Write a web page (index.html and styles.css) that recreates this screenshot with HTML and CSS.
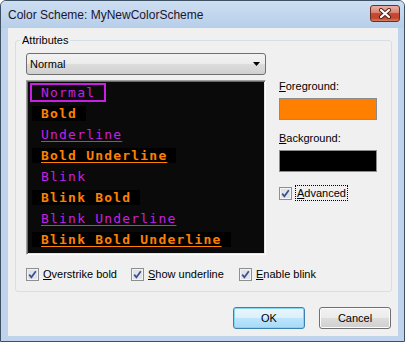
FILE: index.html
```html
<!DOCTYPE html>
<html lang="en">

<head>
    <link rel="stylesheet" href="styles.css">
</head>

<body>
    <div class="window">
        <div class="titlebar">
            <span class="title">Color Scheme: MyNewColorScheme</span>
            <span class="close-btn">
                <svg width="14" height="11" viewBox="0 0 14 11">
                    <path d="M3 2 L11 9 M11 2 L3 9" stroke="#4a1a14" stroke-width="4" stroke-linecap="round" />
                    <path d="M3 2 L11 9 M11 2 L3 9" stroke="#ffffff" stroke-width="2.2" stroke-linecap="round" />
                </svg>
            </span>
        </div>
        <div class="client">
            <fieldset class="group">
                <legend>Attributes</legend>
                <div class="group-main">
                    <div class="left-col">
                        <div class="dropdown">
                            <span>Normal</span>
                            <svg class="arrow" width="7" height="4" viewBox="0 0 7 4"><path d="M0 0 H7 L3.5 4 Z" fill="#000" /></svg>
                        </div>
                        <!-- attribute preview, one row per style -->
                        <div class="attr-list">
                            <div class="row"><span class="item selected"> Normal </span></div>
                            <div class="row"><span class="item bold"> Bold </span></div>
                            <div class="row"><span class="item"> <u>Underline</u> </span></div>
                            <div class="row"><span class="item bold"> <u>Bold Underline</u> </span></div>
                            <div class="row"><span class="item"> Blink </span></div>
                            <div class="row"><span class="item bold"> Blink Bold </span></div>
                            <div class="row"><span class="item"> <u>Blink Underline</u> </span></div>
                            <div class="row"><span class="item bold"> <u>Blink Bold Underline</u> </span></div>
                        </div>
                    </div>
                    <div class="right-col">
                        <div class="field-label"><u>F</u>oreground:</div>
                        <div class="swatch swatch-fg"></div>
                        <div class="field-label"><u>B</u>ackground:</div>
                        <div class="swatch swatch-bg"></div>
                        <label class="check check-advanced">
                            <span class="box">
                                <svg width="13" height="13" viewBox="0 0 13 13">
                                    <rect x="0.5" y="0.5" width="12" height="12" fill="#f3f3f3" stroke="#8e8f8f" />
                                    <rect x="2" y="2" width="9" height="9" fill="#dfe3ea" />
                                    <path d="M3.2 6.6 L5.4 9.3 L9.8 3.2" fill="none" stroke="#3b4f8c" stroke-width="1.7" />
                                </svg>
                            </span>
                            <span class="focus"><u>A</u>dvanced</span>
                        </label>
                    </div>
                </div>
                <div class="options">
                    <label class="check opt-overstrike">
                        <span class="box">
                            <svg width="13" height="13" viewBox="0 0 13 13">
                                <rect x="0.5" y="0.5" width="12" height="12" fill="#f3f3f3" stroke="#8e8f8f" />
                                <rect x="2" y="2" width="9" height="9" fill="#dfe3ea" />
                                <path d="M3.2 6.6 L5.4 9.3 L9.8 3.2" fill="none" stroke="#3b4f8c" stroke-width="1.7" />
                            </svg>
                        </span>
                        <span><u>O</u>verstrike bold</span>
                    </label>
                    <label class="check opt-underline">
                        <span class="box">
                            <svg width="13" height="13" viewBox="0 0 13 13">
                                <rect x="0.5" y="0.5" width="12" height="12" fill="#f3f3f3" stroke="#8e8f8f" />
                                <rect x="2" y="2" width="9" height="9" fill="#dfe3ea" />
                                <path d="M3.2 6.6 L5.4 9.3 L9.8 3.2" fill="none" stroke="#3b4f8c" stroke-width="1.7" />
                            </svg>
                        </span>
                        <span><u>S</u>how underline</span>
                    </label>
                    <label class="check opt-blink">
                        <span class="box">
                            <svg width="13" height="13" viewBox="0 0 13 13">
                                <rect x="0.5" y="0.5" width="12" height="12" fill="#f3f3f3" stroke="#8e8f8f" />
                                <rect x="2" y="2" width="9" height="9" fill="#dfe3ea" />
                                <path d="M3.2 6.6 L5.4 9.3 L9.8 3.2" fill="none" stroke="#3b4f8c" stroke-width="1.7" />
                            </svg>
                        </span>
                        <span><u>E</u>nable blink</span>
                    </label>
                </div>
            </fieldset>
            <div class="buttons">
                <button class="btn btn-default">OK</button>
                <button class="btn">Cancel</button>
            </div>
        </div>
    </div>
</body>

</html>
```

FILE: styles.css
```css
body {
    margin: 0;
    font-family: "Liberation Sans", Arial, sans-serif;
    font-size: 11px;
    color: #000;
}

.window {
    width: 405px;
    height: 342px;
    box-sizing: border-box;
    border: 1px solid #3e5064;
    border-radius: 6px 6px 0 0;
    background: #bfd4ec;
    display: flex;
    flex-direction: column;
}

.titlebar {
    height: 27px;
    display: flex;
    align-items: center;
    padding: 0 4px 0 7px;
    background: linear-gradient(#cddef2, #b7cee9);
    border-radius: 5px 5px 0 0;
}

.title {
    font-size: 12px;
    color: #1b1530;
}

.close-btn {
    margin-left: auto;
    align-self: flex-start;
    margin-top: 4px;
    width: 30px;
    height: 17px;
    box-sizing: border-box;
    border: 1px solid #6e2d24;
    border-radius: 3px;
    background: linear-gradient(#eab0a4 0, #d98170 45%, #c84a34 50%, #c4432c 80%, #d7805e 100%);
    display: flex;
    align-items: center;
    justify-content: center;
}

.client {
    flex: 1;
    margin: 0 6px 5px 7px;
    background: #f0f0f0;
    display: flex;
    flex-direction: column;
}

/* Attributes group box */
.group {
    margin: 5px 6px 0 7px;
    padding: 6px 13px 10px 10px;
    border: 1px solid #d5dfe5;
    border-radius: 3px;
    min-width: 0;
}

.group legend {
    padding: 0 2px;
    margin-left: -6px;
    line-height: 14px;
}

.group-main {
    display: flex;
    gap: 13px;
}

.left-col {
    width: 240px;
    display: flex;
    flex-direction: column;
    gap: 5px;
}

.dropdown {
    height: 22px;
    box-sizing: border-box;
    border: 1px solid #707070;
    border-radius: 3px;
    display: flex;
    align-items: center;
    justify-content: space-between;
    padding: 0 5px 0 3px;
    background: linear-gradient(#f2f2f2 0, #ebebeb 50%, #dddddd 50%, #d0d0d0 100%);
}

.attr-list {
    height: 175px;
    box-sizing: border-box;
    padding-top: 1px;
    border: 1px solid;
    border-color: #a0a0a0 #ffffff #ffffff #a0a0a0;
    box-shadow: inset 1px 1px 0 #696969, inset -1px -1px 0 #e3e3e3;
    background: #0a0a0a;
}

.row {
    height: 21px;
    display: flex;
    align-items: center;
    padding-left: 5px;
}

.item {
    font-family: "DejaVu Sans Mono", monospace;
    font-size: 13px;
    letter-spacing: 1.2px;
    line-height: 15px;
    white-space: pre;
    color: #c820e0;
}

.item u {
    text-underline-offset: 2px;
}

.item.bold {
    font-weight: bold;
    color: #ff8000;
    background: #000;
}

.item.selected {
    outline: 2px solid #c820e0;
}

.right-col {
    width: 98px;
    display: flex;
    flex-direction: column;
}

.field-label {
    line-height: 14px;
    margin-top: 11px;
}

.field-label:first-child {
    margin-top: 26px;
}

.swatch {
    height: 22px;
    margin-top: 5px;
    box-sizing: border-box;
    border: 1px solid #8c8c8c;
}

.swatch-fg {
    background: #ff8000;
}

.swatch-bg {
    background: #000;
}

.check {
    display: flex;
    align-items: center;
    gap: 4px;
    line-height: 14px;
}

.box {
    display: flex;
    width: 13px;
    height: 13px;
}

.check-advanced {
    margin-top: 14px;
}

.focus {
    outline: 1px dotted #000;
    padding: 0 1px;
}

.options {
    display: flex;
    margin-top: 12px;
}

.opt-overstrike {
    width: 105px;
}

.opt-underline {
    width: 108px;
}

.buttons {
    display: flex;
    justify-content: flex-end;
    gap: 14px;
    margin: 15px 7px 0 0;
}

.btn {
    width: 72px;
    height: 22px;
    padding: 0;
    border: 1px solid #707070;
    border-radius: 3px;
    background: linear-gradient(#f2f2f2 0, #ebebeb 50%, #dddddd 50%, #cfcfcf 100%);
    box-shadow: inset 0 0 0 1px #fbfbfb;
    font-family: "Liberation Sans", Arial, sans-serif;
    font-size: 11px;
    color: #000;
}

.btn-default {
    border-color: #3c7fb1;
    background: linear-gradient(#eaf6fd 0, #d9f0fc 50%, #bee6fd 50%, #a7d9f5 100%);
    box-shadow: inset 0 0 0 1px #88d5f2;
}
```
